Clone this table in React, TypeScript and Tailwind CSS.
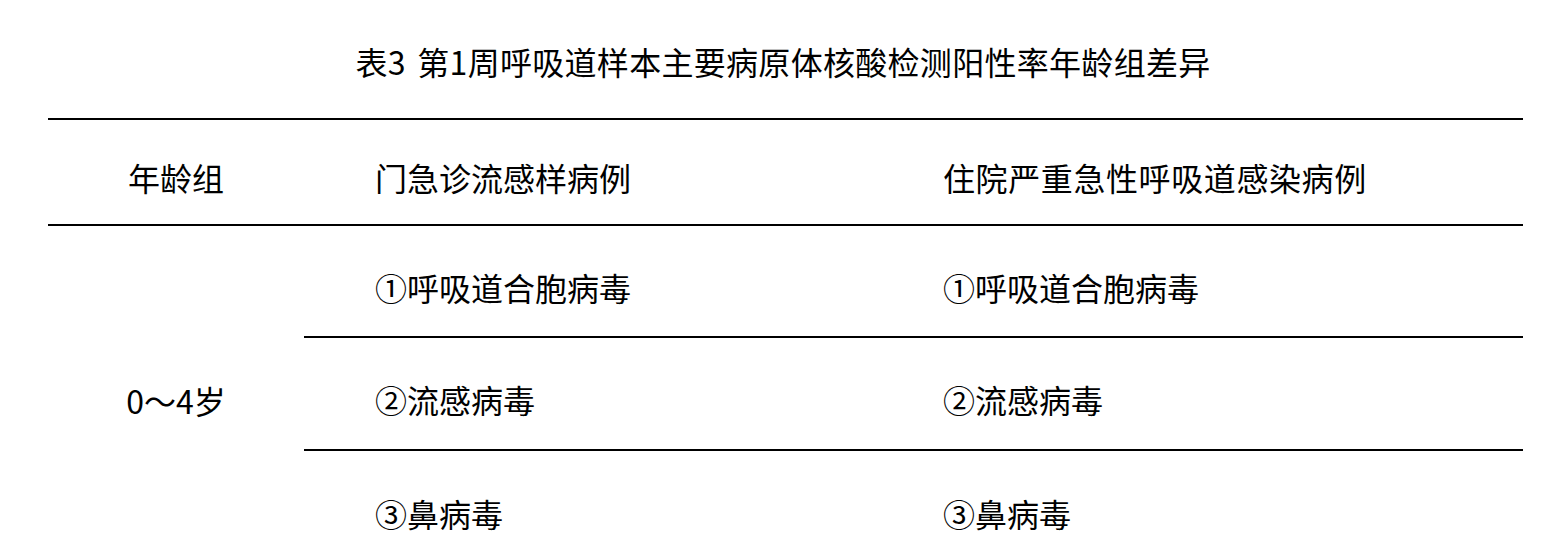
import React from 'react';

type Row = {
  outpatient: string;
  inpatient: string;
  height: string;
};

const rows: Row[] = [
  { outpatient: '①呼吸道合胞病毒', inpatient: '①呼吸道合胞病毒', height: 'h-[112px] border-b-2' },
  { outpatient: '②流感病毒', inpatient: '②流感病毒', height: 'h-[113px] border-b-2' },
  { outpatient: '③鼻病毒', inpatient: '③鼻病毒', height: 'h-[112px]' },
];

const App: React.FC = () => {
  return (
    <div className="h-[556px] w-[1566px] overflow-hidden bg-white font-['Noto_Sans_CJK_SC','Noto_Sans',sans-serif] text-[32px] leading-none text-black">
      <div className="flex h-[118px] items-center justify-center pt-[3px]">
        <h1 className="font-normal tracking-[0.3px] [word-spacing:4px]">
          表3 第1周呼吸道样本主要病原体核酸检测阳性率年龄组差异
        </h1>
      </div>

      <div className="ml-[48px] w-[1475px]">
        <div className="grid h-[108px] grid-cols-[256px_568px_1fr] border-y-2 border-black">
          <div className="flex items-center justify-center pt-[10px]">年龄组</div>
          <div className="flex items-center pl-[71px] pt-[10px]">门急诊流感样病例</div>
          <div className="flex items-center pl-[71px] pt-[10px] tracking-[0.6px]">
            住院严重急性呼吸道感染病例
          </div>
        </div>

        <div className="grid grid-cols-[256px_1fr]">
          <div className="flex items-center justify-center pt-[10px]">0～4岁</div>
          <div className="flex flex-col">
            {rows.map((row, i) => (
              <div
                key={i}
                className={`grid grid-cols-[568px_1fr] border-black ${row.height}`}
              >
                <div className="flex items-center pl-[71px] pt-[11px]">{row.outpatient}</div>
                <div className="flex items-center pl-[71px] pt-[11px]">{row.inpatient}</div>
              </div>
            ))}
          </div>
        </div>
      </div>
    </div>
  );
};

export default App;
